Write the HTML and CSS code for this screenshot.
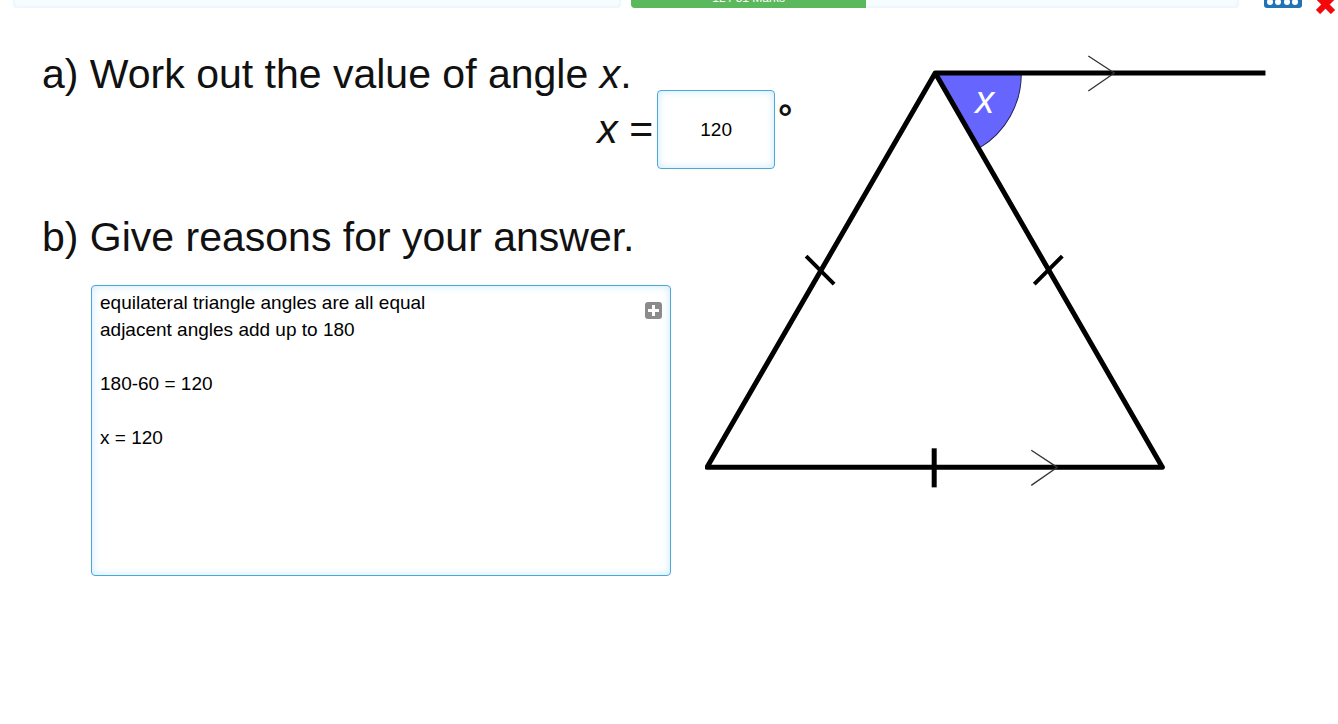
FILE: index.html
```html
<!DOCTYPE html>
<html lang="en">
<head>
    <meta charset="UTF-8">
    <meta name="viewport" content="width=device-width, initial-scale=1.0">
    <title>Angles Question</title>
    <link rel="stylesheet" href="styles.css">
</head>
<body>
    <!-- Top bar, scrolled mostly out of view -->
    <header>
        <div class="bar"></div>
        <div class="bar progress">
            <div class="progress-done" style="width: 38.7%">12 / 31 Marks</div>
        </div>
        <button type="button" class="icon-button keyboard" aria-label="Keyboard">
            <svg width="38" height="20" viewBox="0 0 38 20">
                <rect x="0" y="-6" width="38" height="26" rx="3" fill="#2372b5"/>
                <g fill="white">
                    <rect x="4" y="4" width="5" height="5" rx="2"/>
                    <rect x="12" y="4" width="5" height="5" rx="2"/>
                    <rect x="21" y="4" width="5" height="5" rx="2"/>
                    <rect x="29" y="4" width="5" height="5" rx="2"/>
                    <circle cx="6" cy="14" r="3"/>
                    <circle cx="14" cy="14" r="3"/>
                    <circle cx="23" cy="14" r="3"/>
                    <circle cx="31" cy="14" r="3"/>
                </g>
            </svg>
        </button>
        <button type="button" class="icon-button close" aria-label="Close">
            <svg width="20" height="26" viewBox="0 0 20 26">
                <path d="M2 9 L17 24 M17 9 L2 24" stroke="#f5080c" stroke-width="6"/>
            </svg>
        </button>
    </header>

    <main>
        <form class="questions">
            <h2>a) Work out the value of angle <i>x</i>.</h2>
            <div class="answer-row">
                <label for="angle"><i>x</i> =</label>
                <input type="text" id="angle" name="angle" value="120">
                <span class="degree">°</span>
            </div>

            <h2 class="part-b"><label for="reasons">b) Give reasons for your answer.</label></h2>
            <div class="reasons-box">
                <textarea id="reasons" name="reasons" spellcheck="false">equilateral triangle angles are all equal
adjacent angles add up to 180

180-60 = 120

x = 120</textarea>
                <button type="button" class="add" aria-label="Add">
                    <svg width="17" height="17" viewBox="0 0 17 17">
                        <rect width="17" height="17" rx="3" fill="#8b8b8b"/>
                        <path d="M8.500 3 V14 M3 8.500 H14" stroke="white" stroke-width="3"/>
                    </svg>
                </button>
            </div>
        </form>

        <svg class="diagram" viewBox="705 50 561 440" fill="none" stroke="black">
            <!-- angle x -->
            <path d="M935 73 H1021 A86 86 0 0 1 979 148 Z" fill="#6666ff" stroke="#222255" stroke-width="1"/>
            <!-- triangle and parallel line -->
            <path d="M1265 73 H935 L1162 467 H707 L935 73" stroke-width="5" stroke-linejoin="round"/>
            <!-- equal side marks -->
            <path d="M806 256 L834 284 M1062 256 L1034 284" stroke-width="4"/>
            <path d="M934 448 V487" stroke-width="5"/>
            <!-- parallel arrows -->
            <path d="M1088 56 L1114 73 L1088 91 M1031 450 L1057 467 L1031 485" stroke="#333333" stroke-width="1.300"/>
            <text x="975" y="113" class="angle-name">x</text>
        </svg>
    </main>
</body>
</html>
```
FILE: styles.css
```css
body {
    font-family: "Liberation Sans", Arial, sans-serif;
    margin: 0;
    padding: 0;
    background-color: white;
    color: #111111;
}

header {
    display: flex;
    align-items: flex-start;
    height: 26px;
    margin-top: -12px;
    padding: 0 2px 0 13px;
}

.bar {
    flex: 1;
    height: 20px;
    background-color: #f7fcff;
    border-radius: 4px;
    box-shadow: inset 0 0 4px #ddeffa;
    overflow: hidden;
}

.progress {
    margin-left: 10px;
}

.progress-done {
    height: 20px;
    background-color: #5cb85c;
    color: white;
    font-size: 12px;
    line-height: 20px;
    text-align: center;
}

.icon-button {
    padding: 0;
    border: none;
    background: none;
    cursor: pointer;
}

.icon-button svg,
.add svg {
    display: block;
}

.keyboard {
    margin-left: 25px;
}

.close {
    margin-left: 14px;
}

main {
    display: grid;
    grid-template-columns: 628fr 561fr;
    column-gap: 34px;
    align-items: start;
    padding: 36px 72px 40px 42px;
}

h2 {
    margin: 0;
    font-size: 41px;
    font-weight: normal;
    line-height: 40px;
    white-space: nowrap;
}

.questions {
    padding-top: 4px;
}

.answer-row {
    display: flex;
    justify-content: flex-end;
    align-items: center;
    margin-top: -4px;
    margin-right: -122px;
    font-size: 41px;
}

input {
    box-sizing: border-box;
    width: 118px;
    height: 79px;
    margin-left: 4px;
    text-align: center;
}

input,
textarea {
    border: 1px solid #4aa8d8;
    border-radius: 4px;
    box-shadow: inset 0 0 8px #c8e8fa;
    color: black;
    font-family: inherit;
    font-size: 19px;
}

.degree {
    align-self: flex-start;
    margin-top: 8px;
    margin-left: 3px;
    font-size: 36px;
    font-weight: bold;
    line-height: 40px;
}

.part-b {
    margin-top: 48px;
}

.reasons-box {
    position: relative;
    margin-top: 28px;
    margin-left: 49px;
}

textarea {
    display: block;
    box-sizing: border-box;
    width: 100%;
    height: 291px;
    padding: 3px 8px;
    line-height: 27px;
    resize: none;
}

.add {
    position: absolute;
    top: 17px;
    right: 9px;
    padding: 0;
    border: none;
    background: none;
    cursor: pointer;
}

.diagram {
    width: 100%;
}

.angle-name {
    fill: white;
    stroke: none;
    font-size: 38px;
    font-style: italic;
}
```
